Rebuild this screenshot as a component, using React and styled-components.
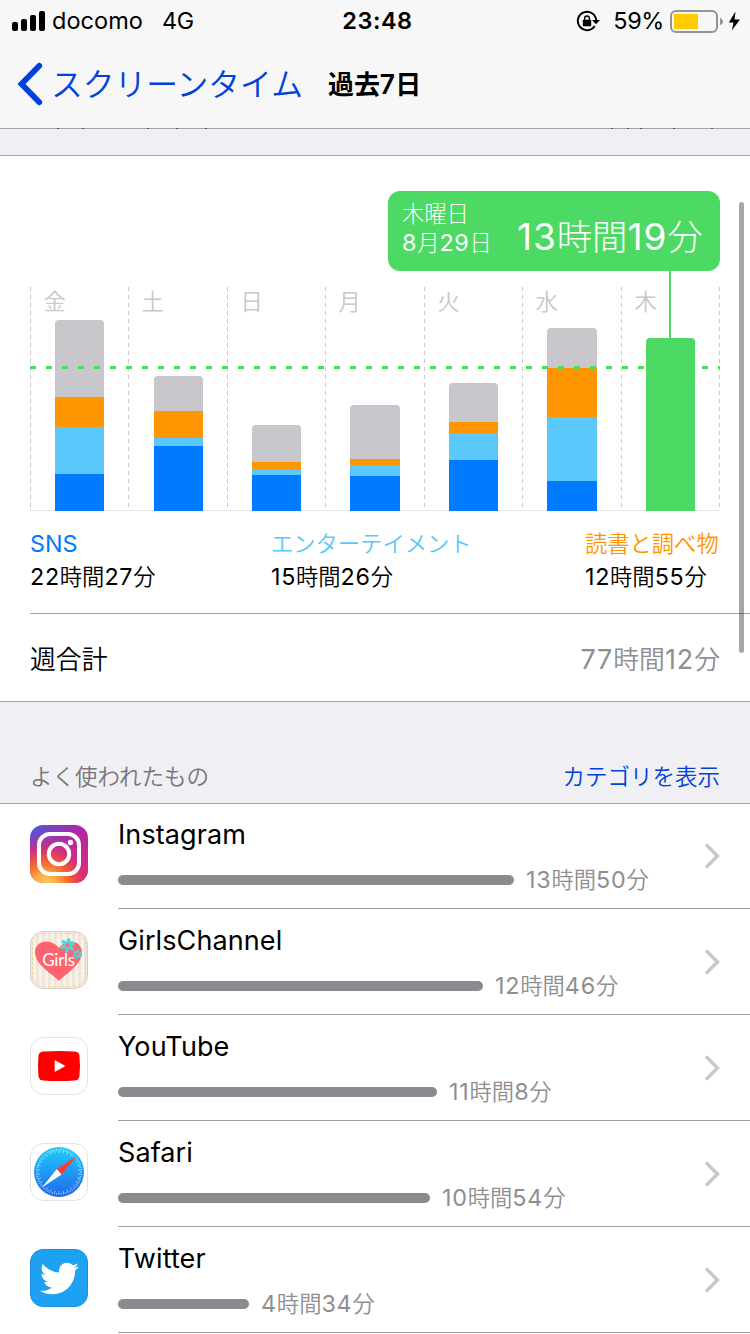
import React from 'react';
import styled, { createGlobalStyle } from 'styled-components';
import { FaTwitter } from 'react-icons/fa';

const GlobalStyle = createGlobalStyle`
    * {
        box-sizing: border-box;
    }

    body {
        margin: 0;
        overflow: hidden;
        background-color: #ffffff;
        font-family: Inter, "Noto Sans CJK JP", sans-serif;
        color: #000000;
    }
`;

const Screen = styled.div`
    position: relative;
    width: 750px;
    height: 1334px;
    overflow: hidden;
    background-color: #ffffff;
`;

const Kana = styled.span`
    font-family: "Noto Sans CJK JP", sans-serif;
    font-size: ${(props) => props.$scale}em;
    font-weight: ${(props) => props.$weight};
    line-height: 0;
    letter-spacing: 0;
`;

const TextLine = styled.span`
    display: block;
    white-space: nowrap;
    font-size: ${(props) => props.$size}px;
    line-height: ${(props) => props.$line}px;
    letter-spacing: ${(props) => props.$spacing || 0}px;
    font-weight: ${(props) => props.$weight || 400};
    color: ${(props) => props.$color || '#000000'};
`;

/* status bar */

const StatusBar = styled.header`
    display: grid;
    grid-template-columns: 1fr auto 1fr;
    align-items: center;
    height: 40px;
    padding: 0 9px 0 12px;
    background-color: #f7f7f7;
`;

const StatusSide = styled.div`
    display: flex;
    align-items: center;
    justify-content: ${(props) => (props.$end ? 'flex-end' : 'flex-start')};
`;

const Clock = styled.div`
    padding-left: 2px;
`;

const SignalIcon = styled.svg`
    flex: none;
    width: 34px;
    height: 40px;
    margin-right: 6px;
`;

const LockIcon = styled.svg`
    flex: none;
    width: 24px;
    height: 40px;
    margin-right: 13px;
`;

const BatteryIcon = styled.svg`
    flex: none;
    width: 71px;
    height: 40px;
    margin-left: 6px;
`;

const Network = styled.div`
    margin-left: 19px;
`;

/* navigation bar */

const NavBar = styled.nav`
    position: relative;
    display: flex;
    align-items: center;
    height: 89px;
    padding-left: 17px;
    background-color: #f7f7f7;
    border-bottom: 1px solid #a2a2a6;
`;

const BackIcon = styled.svg`
    width: 26px;
    height: 44px;
    margin-right: 8px;
`;

const NavTitle = styled.div`
    margin-left: 25px;
`;

// tips of the scrolled row that still show at the edge of the bar
const ScrolledText = styled.svg`
    position: absolute;
    left: 0;
    bottom: -1px;
    width: 750px;
    height: 1px;
`;

const GroupGap = styled.div`
    height: 27px;
    background-color: #efeff4;
    border-bottom: 1px solid #a2a2a6;
`;

/* chart */

const ChartSection = styled.section`
    position: relative;
    height: 457px;
    padding: 131px 30px 0;
`;

const Chart = styled.div`
    position: relative;
    display: grid;
    grid-template-columns: 98px 99px 98px 99px 98px 99px 99px;
    height: 224px;
    border-bottom: 1px solid #e5e5ea;
`;

const Day = styled.div`
    position: relative;
    display: flex;
    align-items: flex-end;
    height: 224px;
`;

const Dashes = styled.div`
    position: absolute;
    left: ${(props) => (props.$last ? 'auto' : '0')};
    right: ${(props) => (props.$last ? '0' : 'auto')};
    top: 0;
    width: 1px;
    height: 221px;
    background: repeating-linear-gradient(to bottom, #c7c7cc 0 4px, transparent 4px 8px);
`;

const DayLabel = styled.div`
    position: absolute;
    left: 13.5px;
    top: -2px;
`;

const Bar = styled.div`
    width: ${(props) => props.$width}px;
    margin-left: ${(props) => props.$left}px;
    border-radius: 4px 4px 0 0;
    overflow: hidden;
`;

const Segment = styled.div`
    height: ${(props) => props.$height}px;
    background-color: ${(props) => props.$color};
`;

const Average = styled.div`
    position: absolute;
    left: 0;
    right: 0;
    top: 79px;
    height: 3px;
    background: repeating-linear-gradient(to right, #4cd964 0 6px, transparent 6px 16px);
`;

const Callout = styled.div`
    position: absolute;
    left: 388px;
    top: 35px;
    display: flex;
    width: 332px;
    height: 80px;
    padding: 8px 0 0 14px;
    border-radius: 12px;
    background-color: #4cd964;
`;

const CalloutDate = styled.div`
    width: 115px;
`;

const CalloutTime = styled.div`
    padding-top: 13px;
`;

const CalloutStem = styled.div`
    position: absolute;
    left: 669px;
    top: 115px;
    width: 2px;
    height: 68px;
    background-color: #4cd964;
`;

const Legend = styled.div`
    display: grid;
    grid-template-columns: 241px 314px auto;
    padding-top: 16px;
`;

const TotalRow = styled.div`
    display: flex;
    justify-content: space-between;
    height: 88px;
    margin-left: 30px;
    padding: 26px 30px 0 0;
    border-top: 1px solid #a2a2a6;
`;

const ListHeader = styled.div`
    display: flex;
    justify-content: space-between;
    height: 103px;
    padding: 58px 30px 0;
    background-color: #efeff4;
    border-top: 1px solid #a2a2a6;
    border-bottom: 1px solid #a2a2a6;
`;

/* app list */

const AppList = styled.ul`
    margin: -1px 0 0;
    padding: 0;
    list-style: none;
`;

const AppRow = styled.li`
    display: flex;
    height: 106px;
    padding-left: 30px;
`;

const AppIcon = styled.svg`
    flex: none;
    width: 58px;
    height: 58px;
    margin: 22px 30px 0 0;
`;

const TwitterTile = styled.div`
    display: flex;
    justify-content: center;
    align-items: center;
    flex: none;
    width: 58px;
    height: 58px;
    margin: 22px 30px 0 0;
    border: 1px solid #1b8fd8;
    border-radius: 13px;
    background-color: #1da1f2;
    color: #ffffff;
    font-size: 39px;
`;

const AppBody = styled.div`
    flex: 1;
    display: flex;
    justify-content: space-between;
    border-bottom: 1px solid #a2a2a6;
`;

const AppInfo = styled.div`
    padding-top: 14px;
`;

const Usage = styled.div`
    display: flex;
    align-items: center;
    gap: 12px;
    height: 30px;
    margin-top: 12px;
`;

const UsageBar = styled.div`
    width: ${(props) => props.$width}px;
    height: 10px;
    border-radius: 5px;
    background-color: #8a8a8f;
`;

const UsageTime = styled.div`
    height: 31px;
`;

const Chevron = styled.svg`
    width: 18px;
    height: 28px;
    margin: 39px 29px 0 0;
`;

const ScrollThumb = styled.div`
    position: absolute;
    left: 739px;
    top: 202px;
    width: 5px;
    height: 451px;
    border-radius: 3px;
    background-color: rgba(0, 0, 0, 0.35);
`;

const GRAY = '#c7c7cc';
const ORANGE = '#ff9500';
const SKY = '#5ac8fa';
const BLUE = '#007aff';
const GREEN = '#4cd964';
const LINK = '#0040dd';
const SUB = '#8e8e93';

const WEEK = [
    { day: '金', left: 25, width: 49, bars: [[GRAY, 77], [ORANGE, 30], [SKY, 47], [BLUE, 37]] },
    { day: '土', left: 26, width: 49, bars: [[GRAY, 35], [ORANGE, 27], [SKY, 8], [BLUE, 65]] },
    { day: '日', left: 25, width: 49, bars: [[GRAY, 37], [ORANGE, 7], [SKY, 6], [BLUE, 36]] },
    { day: '月', left: 25, width: 50, bars: [[GRAY, 54], [ORANGE, 6], [SKY, 11], [BLUE, 35]] },
    { day: '火', left: 25, width: 49, bars: [[GRAY, 39], [ORANGE, 11], [SKY, 27], [BLUE, 51]] },
    { day: '水', left: 25, width: 50, bars: [[GRAY, 40], [ORANGE, 49], [SKY, 64], [BLUE, 30]] },
    { day: '木', left: 25, width: 49, bars: [[GREEN, 173]] },
];

const CATEGORIES = [
    { name: 'SNS', time: '22時間27分', color: BLUE },
    { name: 'エンターテイメント', time: '15時間26分', color: SKY },
    { name: '読書と調べ物', time: '12時間55分', color: ORANGE },
];

// Latin letters and digits stay in Inter, Japanese runs get a lighter and smaller face
function Label({ children, kanaWeight = 350, kanaScale = 0.957, ...rest }) {
    const parts = children.split(/([^\x00-\x7F]+)/).filter(Boolean);

    return (
        <TextLine {...rest}>
            {parts.map((part, i) =>
                /[^\x00-\x7F]/.test(part)
                    ? <Kana key={i} $weight={kanaWeight} $scale={kanaScale}>{part}</Kana>
                    : part
            )}
        </TextLine>
    );
}

function InstagramIcon() {
    return (
        <AppIcon viewBox="0 0 58 58">
            <defs>
                <linearGradient id="ig-base" x1="0" y1="0" x2="1" y2="0.9">
                    <stop offset="0" stopColor="#4a5bd6" />
                    <stop offset="0.45" stopColor="#a62bb0" />
                    <stop offset="1" stopColor="#e0266f" />
                </linearGradient>
                <radialGradient id="ig-warm" cx="0.27" cy="1.05" r="0.95">
                    <stop offset="0" stopColor="#ffd068" />
                    <stop offset="0.2" stopColor="#fdb045" />
                    <stop offset="0.45" stopColor="#f5602f" />
                    <stop offset="0.7" stopColor="#dd2f70" stopOpacity="0.75" />
                    <stop offset="1" stopColor="#b62bae" stopOpacity="0" />
                </radialGradient>
            </defs>
            <rect width="58" height="58" rx="13" fill="url(#ig-base)" />
            <rect width="58" height="58" rx="13" fill="url(#ig-warm)" />
            <rect x="9" y="9" width="40" height="40" rx="11" fill="none" stroke="#ffffff" strokeWidth="4" />
            <circle cx="29" cy="29" r="10.2" fill="none" stroke="#ffffff" strokeWidth="4" />
            <circle cx="40.5" cy="17.5" r="2.7" fill="#ffffff" />
        </AppIcon>
    );
}

function Flower({ x, y, r }) {
    return (
        <g transform={`translate(${x} ${y})`} fill="#40dcea">
            {[0, 60, 120, 180, 240, 300].map((deg) => (
                <ellipse key={deg} cx="0" cy={-r * 0.6} rx={r * 0.24} ry={r * 0.4} transform={`rotate(${deg + 10})`} />
            ))}
        </g>
    );
}

const IconText = styled.text`
    font-family: Lato, sans-serif;
    font-size: 17px;
    font-weight: 400;
    letter-spacing: -0.3px;
    fill: #ffffff;
`;

function GirlsIcon() {
    return (
        <AppIcon viewBox="0 0 58 58">
            <defs>
                <pattern id="stripes" width="6" height="58" patternUnits="userSpaceOnUse">
                    <rect width="6" height="58" fill="#f8f3ea" />
                    <rect width="3" height="58" fill="#f0e7da" />
                </pattern>
            </defs>
            <rect x="0.5" y="0.5" width="57" height="57" rx="13" fill="url(#stripes)" stroke="#d3cdc7" />
            <rect x="2.5" y="2.5" width="53" height="53" rx="11" fill="none" stroke="#ecd3a4" strokeDasharray="3 2" />
            <path d="M29 50 C24 44 5 34 5 21.500 C5 14.500 10 10.500 16 10.500 C22 10.500 26.500 13.500 29 17 C31.500 13.500 36 10.500 41 10.500 C47 10.500 52 15 52 21.500 C52 34 34 44 29 50 Z" fill="#ff6370" />
            <Flower x={37.7} y={14.3} r={7.5} />
            <Flower x={47.3} y={23.3} r={5} />
            <IconText x="12.3" y="34.500">Girls</IconText>
        </AppIcon>
    );
}

function YouTubeIcon() {
    return (
        <AppIcon viewBox="0 0 58 58">
            <rect x="0.5" y="0.5" width="57" height="57" rx="13" fill="#ffffff" stroke="#e2e2e2" />
            <path d="M8.500 18.500 Q9.200 15 13 14.600 Q29 13.400 45 14.600 Q48.800 15 49.400 18.500 Q50.600 29 49.400 39.500 Q48.800 43 45 43.400 Q29 44.600 13 43.400 Q9.200 43 8.500 39.500 Q7.400 29 8.500 18.500 Z" fill="#ff0000" />
            <path d="M24.700 23 L35.500 29 L24.700 35 Z" fill="#ffffff" />
        </AppIcon>
    );
}

function SafariIcon() {
    return (
        <AppIcon viewBox="0 0 58 58">
            <defs>
                <linearGradient id="safari-dial" x1="0" y1="0" x2="0" y2="1">
                    <stop offset="0" stopColor="#1fcdfa" />
                    <stop offset="1" stopColor="#1f66ee" />
                </linearGradient>
            </defs>
            <rect x="0.5" y="0.5" width="57" height="57" rx="13" fill="#ffffff" stroke="#e2e2e2" />
            <circle cx="29" cy="29" r="25" fill="url(#safari-dial)" />
            {Array.from({ length: 60 }, (_, i) => (
                <line
                    key={i}
                    x1="29"
                    y1="6"
                    x2="29"
                    y2={i % 2 ? 8 : 9.800}
                    stroke="#ffffff"
                    strokeWidth="0.7"
                    strokeOpacity="0.75"
                    transform={`rotate(${i * 6} 29 29)`}
                />
            ))}
            <path d="M46.500 13.500 L26.800 26 L31.500 31.500 Z" fill="#ff3b30" />
            <path d="M12 44.500 L26.800 26 L31.500 31.500 Z" fill="#ffffff" />
        </AppIcon>
    );
}

function TwitterIcon() {
    return (
        <TwitterTile>
            <FaTwitter />
        </TwitterTile>
    );
}

const APPS = [
    { name: 'Instagram', time: '13時間50分', width: 396, icon: InstagramIcon },
    { name: 'GirlsChannel', time: '12時間46分', width: 365, icon: GirlsIcon },
    { name: 'YouTube', time: '11時間8分', width: 319, icon: YouTubeIcon },
    { name: 'Safari', time: '10時間54分', width: 312, icon: SafariIcon },
    { name: 'Twitter', time: '4時間34分', width: 131, icon: TwitterIcon },
];

export default function App() {
    return (
        <Screen>
            <GlobalStyle />

            <StatusBar>
                <StatusSide>
                    <SignalIcon viewBox="0 0 34 40">
                        <rect x="0" y="21" width="6" height="9" rx="2" />
                        <rect x="9" y="18" width="6" height="12" rx="2" />
                        <rect x="18" y="14" width="6" height="16" rx="2" />
                        <rect x="27" y="10" width="6" height="20" rx="2" />
                    </SignalIcon>
                    <Label $size={23.5} $line={42} $spacing={0.05}>docomo</Label>
                    <Network>
                        <Label $size={23.3} $line={42} $spacing={-0.3}>4G</Label>
                    </Network>
                </StatusSide>
                <Clock>
                    <Label $size={23.5} $line={42} $weight={600} $spacing={0.5}>23:48</Label>
                </Clock>
                <StatusSide $end>
                    <LockIcon viewBox="0 0 24 40">
                        <path d="M18.700 25 A9.200 9.200 0 1 1 20.200 19.500" fill="none" stroke="#000000" strokeWidth="2" />
                        <path d="M16 19 H24 L20 23.300 Z" />
                        <rect x="6.800" y="18.800" width="8.400" height="6.400" rx="0.8" />
                        <path d="M8.600 19.500 V17.400 A2.400 2.400 0 0 1 13.400 17.400 V19.500" fill="none" stroke="#000000" strokeWidth="1.4" />
                    </LockIcon>
                    <Label $size={23.5} $line={42} $spacing={-0.4}>59%</Label>
                    <BatteryIcon viewBox="0 0 71 40">
                        <rect x="1" y="10" width="46" height="21" rx="5" fill="none" stroke="#949494" strokeWidth="2" />
                        <rect x="4" y="13" width="24" height="15" fill="#ffcc00" />
                        <path d="M50 17 Q53 18 53 20.500 Q53 23 50 24 Z" fill="#949494" />
                        <path d="M65.500 10.500 L58.800 21.500 H63.500 L61.800 29.500 L70 18.500 H64.600 Z" />
                    </BatteryIcon>
                </StatusSide>
            </StatusBar>

            <NavBar>
                <BackIcon viewBox="0 0 26 44">
                    <path d="M22.300 3.800 L4.500 22 L22.300 40.200" fill="none" stroke={LINK} strokeWidth="5.8" strokeLinecap="round" />
                </BackIcon>
                <Label $size={33} $line={48} $color={LINK} kanaScale={0.963}>スクリーンタイム</Label>
                <NavTitle>
                    <Label $size={26.5} $line={47} $weight={600} kanaWeight={700} kanaScale={0.98}>過去7日</Label>
                </NavTitle>
                <ScrolledText viewBox="0 0 750 1">
                    {[57, 82, 147, 176, 205, 611, 627, 640, 673, 711].map((x) => (
                        <rect key={x} x={x} width="2" height="1" fill="#55555a" />
                    ))}
                </ScrolledText>
            </NavBar>
            <GroupGap />

            <ChartSection>
                <Chart>
                    {WEEK.map(({ day, left, width, bars }, i) => (
                        <Day key={day}>
                            <Dashes />
                            {i === WEEK.length - 1 && <Dashes $last />}
                            <DayLabel>
                                <Label $size={23.3} $line={34} $color="#c7c7cc">{day}</Label>
                            </DayLabel>
                            <Bar $left={left} $width={width}>
                                {bars.map(([color, height]) => (
                                    <Segment key={color} $color={color} $height={height} />
                                ))}
                            </Bar>
                        </Day>
                    ))}
                    <Average />
                </Chart>
                <CalloutStem />
                <Callout>
                    <CalloutDate>
                        <Label $size={23.3} $line={29} $color="#ffffff" kanaWeight={300}>木曜日</Label>
                        <Label $size={23.3} $line={29} $color="#ffffff" $spacing={0.7} kanaWeight={300}>8月29日</Label>
                    </CalloutDate>
                    <CalloutTime>
                        <Label $size={37} $line={50} $color="#ffffff" $spacing={0.9} kanaWeight={300}>13時間19分</Label>
                    </CalloutTime>
                </Callout>
                <Legend>
                    {CATEGORIES.map(({ name, time, color }) => (
                        <div key={name}>
                            <Label $size={23.3} $line={33} $color={color}>{name}</Label>
                            <Label $size={23.3} $line={33} $spacing={0.7}>{time}</Label>
                        </div>
                    ))}
                </Legend>
            </ChartSection>

            <TotalRow>
                <Label $size={27} $line={40}>週合計</Label>
                <Label $size={27} $line={40} $color={SUB} $spacing={0.9}>77時間12分</Label>
            </TotalRow>

            <ListHeader>
                <Label $size={23.3} $line={34} $color="#76767b" kanaScale={0.967}>よく使われたもの</Label>
                <Label $size={23.3} $line={34} $color={LINK} kanaScale={0.967}>カテゴリを表示</Label>
            </ListHeader>

            <AppList>
                {APPS.map(({ name, time, width, icon: Icon }) => (
                    <AppRow key={name}>
                        <Icon />
                        <AppBody>
                            <AppInfo>
                                <Label $size={27} $line={36} $spacing={0.1}>{name}</Label>
                                <Usage>
                                    <UsageBar $width={width} />
                                    <UsageTime>
                                        <Label $size={23.3} $line={30} $color={SUB} $spacing={0.8}>{time}</Label>
                                    </UsageTime>
                                </Usage>
                            </AppInfo>
                            <Chevron viewBox="0 0 18 28">
                                <path d="M3 2.500 L14.500 14 L3 25.500" fill="none" stroke="#c7c7cc" strokeWidth="3.4" />
                            </Chevron>
                        </AppBody>
                    </AppRow>
                ))}
            </AppList>

            <ScrollThumb />
        </Screen>
    );
}
